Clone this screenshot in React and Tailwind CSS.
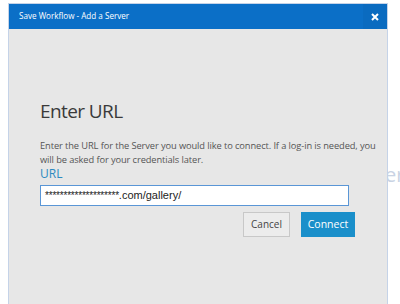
export default function App() {
  const font = { fontFamily: '"Open Sans", "Noto Sans", sans-serif' };
  return (
    <div className="relative w-[400px] h-[304px] bg-white overflow-hidden" style={font}>
      <div className="absolute left-[385px] top-[165px] text-[20px] text-[#c9d3e3] leading-none">ere</div>
      <div className="absolute left-[8px] top-[3px] w-[380px] h-[310px] border border-[#c5d3e8] bg-[#e7e7e7] flex flex-col">
        <div className="h-[25px] bg-[#0b6fc7] flex items-center justify-between">
          <span className="pl-[10px] text-[8.1px] text-white">Save Workflow - Add a Server</span>
          <span className="w-[24px] h-full flex items-center justify-center bg-[#0a6bc0]">
            <svg width="8" height="8" viewBox="0 0 8 8">
              <path d="M1 1 L7 7 M7 1 L1 7" stroke="white" strokeWidth="2" />
            </svg>
          </span>
        </div>
        <div className="pl-[31px] pr-[10px] pt-[70px]">
          <div className="text-[19px] leading-[24px] tracking-[-0.6px] text-[#3a3a3a]">Enter URL</div>
          <div className="mt-[16px] text-[9.3px] leading-[14px] tracking-[-0.1px] text-[#555] w-[345px]">
            Enter the URL for the Server you would like to connect. If a log-in is needed, you will be asked for your credentials later.
          </div>
          <div className="mt-0 text-[12px] leading-[14px] text-[#2d8ac0]">URL</div>
          <div className="mt-[4px] w-[309px] h-[21px] bg-white border border-[#5a96d6] flex items-center px-[4px] text-[11px] text-[#222]" style={{ fontFamily: '"Liberation Sans", Arial, sans-serif' }}>
            <span className="tracking-[-0.2px] text-[10px]">********************</span>
            <span>.com/gallery/</span>
          </div>
          <div className="mt-[6px] w-[315px] flex justify-end gap-[11px]">
            <button className="w-[47px] h-[25px] bg-[#ececec] border border-[#c8c8c8] text-[10px] text-[#444]">Cancel</button>
            <button className="w-[54px] h-[25px] bg-[#1a8fca] text-[10.5px] text-white">Connect</button>
          </div>
        </div>
      </div>
    </div>
  );
}
